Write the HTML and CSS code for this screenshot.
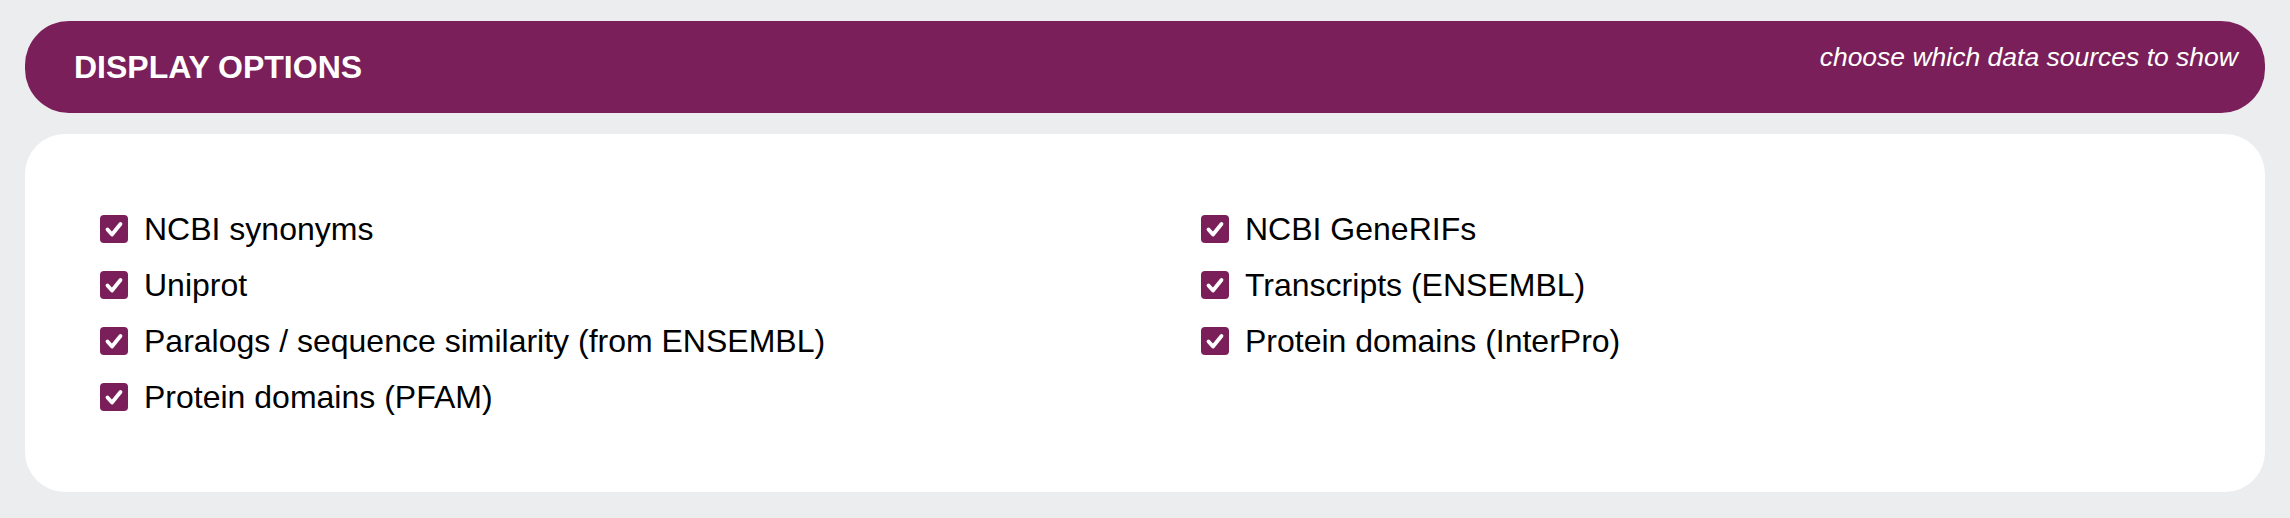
FILE: index.html
```html
<!DOCTYPE html>
<html lang="en">
<head>
<meta charset="utf-8">
<title>Display options</title>
<link rel="stylesheet" href="styles.css">
</head>
<body>
<div class="page">
  <header class="panel-head">
    <h2 class="panel-title">DISPLAY OPTIONS</h2>
    <p class="panel-hint">choose which data sources to show</p>
  </header>
  <section class="panel-body">
    <div class="options">
      <div class="col">
        <label class="opt"><span class="box"><svg viewBox="0 0 28 28"><path d="M7.5 14.5 L12 19.5 L20.5 9"/></svg></span><span class="lbl">NCBI synonyms</span></label>
        <label class="opt"><span class="box"><svg viewBox="0 0 28 28"><path d="M7.5 14.5 L12 19.5 L20.5 9"/></svg></span><span class="lbl">Uniprot</span></label>
        <label class="opt"><span class="box"><svg viewBox="0 0 28 28"><path d="M7.5 14.5 L12 19.5 L20.5 9"/></svg></span><span class="lbl">Paralogs / sequence similarity (from ENSEMBL)</span></label>
        <label class="opt"><span class="box"><svg viewBox="0 0 28 28"><path d="M7.5 14.5 L12 19.5 L20.5 9"/></svg></span><span class="lbl">Protein domains (PFAM)</span></label>
      </div>
      <div class="col">
        <label class="opt"><span class="box"><svg viewBox="0 0 28 28"><path d="M7.5 14.5 L12 19.5 L20.5 9"/></svg></span><span class="lbl">NCBI GeneRIFs</span></label>
        <label class="opt"><span class="box"><svg viewBox="0 0 28 28"><path d="M7.5 14.5 L12 19.5 L20.5 9"/></svg></span><span class="lbl">Transcripts (ENSEMBL)</span></label>
        <label class="opt"><span class="box"><svg viewBox="0 0 28 28"><path d="M7.5 14.5 L12 19.5 L20.5 9"/></svg></span><span class="lbl">Protein domains (InterPro)</span></label>
      </div>
    </div>
  </section>
</div>
</body>
</html>
```

FILE: styles.css
```css
html, body {
  margin: 0;
  padding: 0;
  background: #ecedef;
}

body {
  font-family: "Liberation Sans", Arial, Helvetica, sans-serif;
  color: #000;
}

.page {
  padding: 21px 25px 26px 25px;
  display: flex;
  flex-direction: column;
  gap: 21px;
}

.panel-head {
  height: 92px;
  box-sizing: border-box;
  background: #7a1f59;
  border-radius: 44px;
  display: flex;
  justify-content: space-between;
  align-items: center;
  padding: 0 27px 0 49px;
}

.panel-title {
  margin: 0;
  color: #fff;
  font-size: 32px;
  font-weight: bold;
  line-height: 36px;
}

.panel-hint {
  margin: 0;
  align-self: flex-start;
  padding-top: 21px;
  color: #fff;
  font-style: italic;
  font-size: 26.5px;
  line-height: 30px;
}

.panel-body {
  background: #fff;
  border-radius: 40px;
  padding: 67px 75px 67px 75px;
}

.options {
  display: grid;
  grid-template-columns: 1fr 1fr;
  column-gap: 112px;
}

.col {
  display: flex;
  flex-direction: column;
}

.opt {
  display: flex;
  align-items: center;
  gap: 16px;
  height: 56px;
  font-size: 32px;
}

.box {
  width: 28px;
  height: 28px;
  border-radius: 4px;
  background: #7a1f59;
  display: flex;
  flex-shrink: 0;
}

.box svg {
  width: 28px;
  height: 28px;
}

.box path {
  fill: none;
  stroke: #fff;
  stroke-width: 3.8;
  stroke-linecap: round;
  stroke-linejoin: round;
}

.lbl {
  line-height: 36px;
}
```
